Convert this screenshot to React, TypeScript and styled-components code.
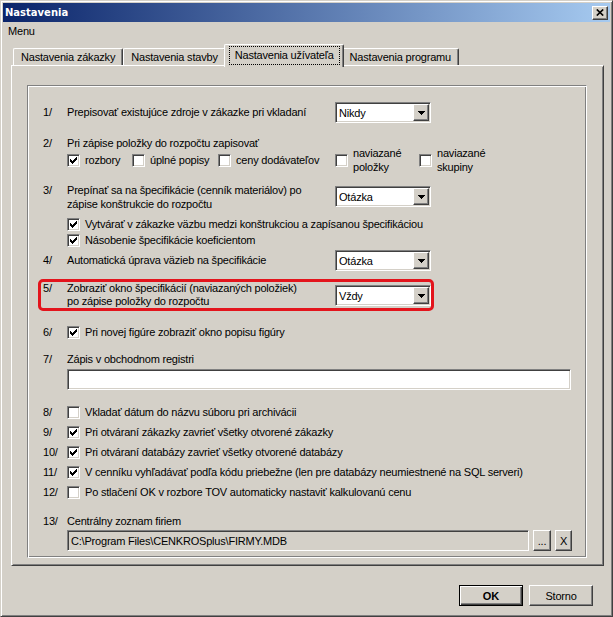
import React from "react";
import styled, { createGlobalStyle, css } from "styled-components";

const face = "#d4d0c8";

const GlobalStyle = createGlobalStyle`
  * { box-sizing: border-box; }
  html, body { margin: 0; padding: 0; background: ${face}; }
  body {
    font-family: "Liberation Sans", Arial, sans-serif;
    font-size: 11px;
    letter-spacing: -0.2px;
    color: #000;
  }
`;

const raisedEdge = css`
  border: 1px solid;
  border-color: #fff #404040 #404040 #fff;
  box-shadow: inset -1px -1px #808080, inset 1px 1px ${face};
`;

const sunkenEdge = css`
  border: 1px solid;
  border-color: #808080 #fff #fff #808080;
  box-shadow: inset 1px 1px #404040, inset -1px -1px ${face};
`;

const Window = styled.div`
  width: 613px;
  height: 617px;
  background: ${face};
  border: 1px solid;
  border-color: ${face} #404040 #404040 ${face};
  box-shadow: inset 1px 1px #fff, inset -1px -1px #808080;
  padding: 2px;
  display: flex;
  flex-direction: column;
`;

const TitleBar = styled.div`
  height: 19px;
  flex: none;
  background: linear-gradient(to right, #0a246a, #a6caf0);
  display: flex;
  align-items: center;
  justify-content: space-between;
  padding: 0 2px 0 2px;
`;

const Title = styled.span`
  font-family: "DejaVu Sans", Verdana, sans-serif;
  font-weight: bold;
  font-size: 10px;
  letter-spacing: 0;
  color: #fff;
`;

const CloseButton = styled.div`
  width: 16px;
  height: 14px;
  ${raisedEdge};
  background: ${face};
  display: flex;
  align-items: center;
  justify-content: center;
`;

const MenuBar = styled.div`
  height: 18px;
  flex: none;
  display: flex;
  align-items: center;
  padding-left: 5px;
`;

const TabStrip = styled.div`
  height: 21px;
  flex: none;
  margin: 4px 0 0 10px;
  display: flex;
  align-items: flex-end;
  position: relative;
  z-index: 1;
`;

const Tab = styled.div<{ $active?: boolean }>`
  position: relative;
  z-index: ${(p) => (p.$active ? 2 : 1)};
  height: ${(p) => (p.$active ? 23 : 17)}px;
  margin: 0 ${(p) => (p.$active ? -2 : 0)}px ${(p) => (p.$active ? -2 : 0)}px;
  padding: ${(p) => (p.$active ? "1px 3px 0 4px" : "2px 7px 0")};
  background: ${face};
  border-top: 1px solid #fff;
  border-left: 1px solid #fff;
  border-right: 1px solid #404040;
  border-radius: 2px 2px 0 0;
  box-shadow: inset -1px 0 #808080;
  line-height: 13px;
  white-space: nowrap;
`;

const Focus = styled.span`
  display: block;
  border: 1px dotted #000;
  padding: 2px 5px 2px;
`;

const Panel = styled.div`
  flex: none;
  height: 501px;
  margin: 0 6px 0 8px;
  border: 1px solid;
  border-color: #fff #404040 #404040 #fff;
  box-shadow: inset 1px 1px ${face}, inset -1px -1px #808080;
  padding: 19px 0 0 15px;
`;

const Group = styled.div`
  width: 560px;
  height: 473px;
  border: 1px solid;
  border-color: #808080 #fff #fff #808080;
  box-shadow: inset 1px 1px #fff, inset -1px -1px #808080;
  padding: 0 14px 0 15px;
  display: flex;
  flex-direction: column;
`;

const Item = styled.div<{ $mt?: number; $align?: string }>`
  display: grid;
  grid-template-columns: 24px 268px auto;
  align-items: ${(p) => p.$align ?? "center"};
  margin-top: ${(p) => p.$mt ?? 0}px;
`;

const Num = styled.span<{ $lh?: number }>`
  line-height: ${(p) => p.$lh ?? 13}px;
  white-space: nowrap;
`;

const Text = styled.span<{ $lh?: number }>`
  line-height: ${(p) => p.$lh ?? 13}px;
  white-space: nowrap;
`;

const Wide = styled.div`
  grid-column: 2 / -1;
`;

const Indent = styled.div<{ $mt?: number }>`
  display: flex;
  padding-left: 24px;
  margin-top: ${(p) => p.$mt ?? 0}px;
`;

const Highlight = styled.div`
  margin: 8px 0 0 -5px;
  width: 396px;
  border: 3px solid #e3141c;
  border-radius: 5px;
  padding-left: 2px;
`;

const CheckItem = styled.div<{ $w?: number }>`
  display: flex;
  align-items: center;
  height: 16px;
  flex: none;
  width: ${(p) => (p.$w ? `${p.$w}px` : "auto")};
`;

const Box = styled.span`
  width: 13px;
  height: 13px;
  flex: none;
  ${sunkenEdge};
  background: #fff;
  display: flex;
  align-items: center;
  justify-content: center;
`;

const CheckLabel = styled.span<{ $lh?: number }>`
  margin-left: 5px;
  line-height: ${(p) => p.$lh ?? 13}px;
  white-space: nowrap;
`;

const Combo = styled.div<{ $mt?: number }>`
  ${sunkenEdge};
  background: #fff;
  width: 96px;
  height: 21px;
  margin-top: ${(p) => p.$mt ?? 0}px;
  display: flex;
  align-items: center;
  padding: 0 1px 0 3px;
`;

const ComboText = styled.span`
  flex: 1;
  white-space: nowrap;
`;

const DropButton = styled.span`
  width: 16px;
  height: 17px;
  ${raisedEdge};
  background: ${face};
  display: flex;
  align-items: center;
  justify-content: center;
`;

const TextBox = styled.div`
  ${sunkenEdge};
  background: #fff;
  height: 21px;
  width: 504px;
`;

const PathRow = styled.div<{ $mt?: number }>`
  display: flex;
  padding-left: 24px;
  margin-top: ${(p) => p.$mt ?? 0}px;
  gap: 4px;
`;

const PathField = styled.div`
  ${sunkenEdge};
  background: ${face};
  height: 21px;
  width: 463px;
  padding-left: 3px;
  display: flex;
  align-items: center;
  white-space: nowrap;
`;

const SmallButton = styled.div<{ $w: number }>`
  ${raisedEdge};
  background: ${face};
  width: ${(p) => p.$w}px;
  height: 21px;
  display: flex;
  align-items: center;
  justify-content: center;
`;

const ButtonRow = styled.div`
  flex: none;
  display: flex;
  justify-content: flex-end;
  gap: 6px;
  margin-top: 19px;
  padding-right: 17px;
`;

const Button = styled.div<{ $default?: boolean }>`
  width: 64px;
  height: 21px;
  display: flex;
  align-items: center;
  justify-content: center;
  background: ${face};
  ${(p) =>
    p.$default
      ? css`
          border: 1px solid #000;
          box-shadow: inset 1px 1px #fff, inset -1px -1px #404040, inset -2px -2px #808080;
          font-weight: bold;
          letter-spacing: 0;
        `
      : raisedEdge};
`;

const Tick = () => (
  <svg width="7" height="7" viewBox="0 0 7 7" shapeRendering="crispEdges">
    <polygon
      fill="#000"
      points="0,2 1,2 1,3 2,3 2,4 3,4 3,3 4,3 4,2 5,2 5,1 6,1 6,0 7,0 7,3 6,3 6,4 5,4 5,5 4,5 4,6 3,6 3,7 2,7 2,6 1,6 1,5 0,5"
    />
  </svg>
);

const Arrow = () => (
  <svg width="7" height="4" viewBox="0 0 7 4" shapeRendering="crispEdges">
    <path d="M0 0h7v1h-1v1h-1v1h-1v1h-1v-1h-1v-1h-1v-1h-1z" fill="#000" />
  </svg>
);

const CloseGlyph = () => (
  <svg width="8" height="7" viewBox="0 0 8 7">
    <path d="M0.8 0.5 L7.2 6.5 M7.2 0.5 L0.8 6.5" stroke="#000" strokeWidth="1.7" />
  </svg>
);

const Check = ({
  checked,
  children,
  w,
  lh,
}: {
  checked?: boolean;
  children: React.ReactNode;
  w?: number;
  lh?: number;
}) => (
  <CheckItem $w={w}>
    <Box>{checked && <Tick />}</Box>
    <CheckLabel $lh={lh}>{children}</CheckLabel>
  </CheckItem>
);

const Select = ({ value, mt }: { value: string; mt?: number }) => (
  <Combo $mt={mt}>
    <ComboText>{value}</ComboText>
    <DropButton>
      <Arrow />
    </DropButton>
  </Combo>
);

const checkRows: { n: string; checked: boolean; text: string }[] = [
  { n: "8/", checked: false, text: "Vkladať dátum do názvu súboru pri archivácii" },
  { n: "9/", checked: true, text: "Pri otváraní zákazky zavrieť všetky otvorené zákazky" },
  { n: "10/", checked: true, text: "Pri otváraní databázy zavrieť všetky otvorené databázy" },
  {
    n: "11/",
    checked: true,
    text: "V cenníku vyhľadávať podľa kódu priebežne (len pre databázy neumiestnené na SQL serveri)",
  },
  { n: "12/", checked: false, text: "Po stlačení OK v rozbore TOV automaticky nastaviť kalkulovanú cenu" },
];

export default function App() {
  return (
    <>
      <GlobalStyle />
      <Window>
        <TitleBar>
          <Title>Nastavenia</Title>
          <CloseButton>
            <CloseGlyph />
          </CloseButton>
        </TitleBar>
        <MenuBar>Menu</MenuBar>
        <TabStrip>
          <Tab>Nastavenia zákazky</Tab>
          <Tab>Nastavenia stavby</Tab>
          <Tab $active>
            <Focus>Nastavenia užívateľa</Focus>
          </Tab>
          <Tab>Nastavenia programu</Tab>
        </TabStrip>
        <Panel>
          <Group>
            <Item $mt={16}>
              <Num>1/</Num>
              <Text>Prepisovať existujúce zdroje v zákazke pri vkladaní</Text>
              <Select value="Nikdy" />
            </Item>

            <Item $mt={14}>
              <Num>2/</Num>
              <Text>Pri zápise položky do rozpočtu zapisovať</Text>
            </Item>
            <Indent $mt={2}>
              <Check checked w={65}>rozbory</Check>
              <Check w={86}>úplné popisy</Check>
              <Check w={117}>ceny dodávateľov</Check>
              <Check w={84} lh={14}>
                naviazané
                <br />
                položky
              </Check>
              <Check lh={14}>
                naviazané
                <br />
                skupiny
              </Check>
            </Indent>

            <Item $mt={15} $align="start">
              <Num $lh={14}>3/</Num>
              <Text $lh={14}>
                Prepínať sa na špecifikácie (cenník materiálov) po
                <br />
                zápise konštrukcie do rozpočtu
              </Text>
              <Select value="Otázka" mt={3} />
            </Item>
            <Indent $mt={5}>
              <Check checked>Vytvárať v zákazke väzbu medzi konštrukciou a zapísanou špecifikáciou</Check>
            </Indent>
            <Indent>
              <Check checked>Násobenie špecifikácie koeficientom</Check>
            </Indent>

            <Item $mt={2}>
              <Num>4/</Num>
              <Text>Automatická úprava väzieb na špecifikácie</Text>
              <Select value="Otázka" />
            </Item>

            <Highlight>
              <Item $align="start">
                <Num>5/</Num>
                <Text>
                  Zobraziť okno špecifikácií (naviazaných položiek)
                  <br />
                  po zápise položky do rozpočtu
                </Text>
                <Select value="Vždy" mt={3} />
              </Item>
            </Highlight>

            <Item $mt={13}>
              <Num>6/</Num>
              <Wide>
                <Check checked>Pri novej figúre zobraziť okno popisu figúry</Check>
              </Wide>
            </Item>

            <Item $mt={13}>
              <Num>7/</Num>
              <Text>Zápis v obchodnom registri</Text>
            </Item>
            <Indent $mt={3}>
              <TextBox />
            </Indent>

            {checkRows.map((r, i) => (
              <Item key={r.n} $mt={i === 0 ? 14 : 4}>
                <Num>{r.n}</Num>
                <Wide>
                  <Check checked={r.checked}>{r.text}</Check>
                </Wide>
              </Item>
            ))}

            <Item $mt={15}>
              <Num>13/</Num>
              <Text>Centrálny zoznam firiem</Text>
            </Item>
            <PathRow $mt={2}>
              <PathField>C:\Program Files\CENKROSplus\FIRMY.MDB</PathField>
              <SmallButton $w={18}>...</SmallButton>
              <SmallButton $w={17}>X</SmallButton>
            </PathRow>
          </Group>
        </Panel>
        <ButtonRow>
          <Button $default>OK</Button>
          <Button>Storno</Button>
        </ButtonRow>
      </Window>
    </>
  );
}
